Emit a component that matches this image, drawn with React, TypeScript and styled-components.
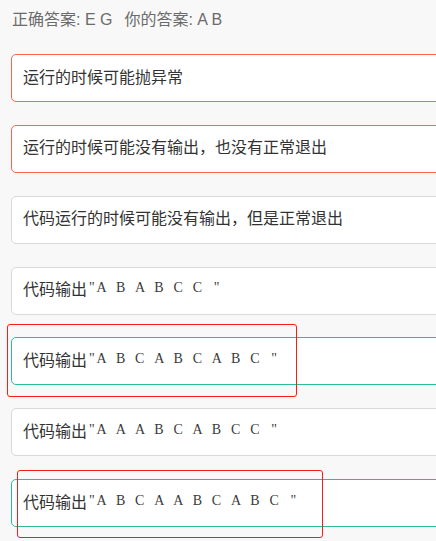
import React from "react";
import styled, { createGlobalStyle } from "styled-components";

const Global = createGlobalStyle`
  html, body {
    margin: 0;
    padding: 0;
    background: #f8f8f8;
    overflow: hidden;
  }
  #root {
    width: 436px;
    height: 541px;
    overflow: hidden;
  }
`;

const Page = styled.div`
  position: relative;
  width: 436px;
  height: 541px;
  overflow: hidden;
  background: #f8f8f8;
  box-sizing: border-box;
  padding: 8px 0 0 11px;
`;

const Summary = styled.div`
  font-family: "Liberation Sans", "Noto Sans CJK SC", sans-serif;
  font-size: 16px;
  line-height: 24px;
  color: #6b6b6b;
  padding-left: 1px;
  display: flex;
  gap: 12px;
`;

const OptionList = styled.div`
  display: flex;
  flex-direction: column;
  gap: 22.85px;
  margin-top: 22px;
`;

type Status = "wrong" | "right" | "plain";

const borderColor: Record<Status, string> = {
  wrong: "#f7694b",
  right: "#2bbc9a",
  plain: "#d9d9d9",
};

const Option = styled.div<{ $status: Status }>`
  width: 520px;
  box-sizing: border-box;
  height: 48px;
  border: 1px solid ${(p) => borderColor[p.$status]};
  border-radius: 5px;
  background: #ffffff;
  padding: 0 11px 5px;
  display: flex;
  align-items: center;
  font-family: "Noto Sans CJK SC", sans-serif;
  font-size: 16px;
  line-height: 24px;
  color: #333333;
  white-space: pre;
`;

const Code = styled.span`
  display: inline-flex;
  align-items: baseline;
  font-family: "Liberation Serif", serif;
  font-size: 14px;
  color: #3a3a3a;
`;

const Cell = styled.span`
  display: inline-block;
  width: 9.6px;
  text-align: center;
`;

const Mark = styled.div<{ $x: number; $y: number; $w: number; $h: number }>`
  position: absolute;
  left: ${(p) => p.$x}px;
  top: ${(p) => p.$y}px;
  width: ${(p) => p.$w}px;
  height: ${(p) => p.$h}px;
  box-sizing: border-box;
  border: 1.5px solid #f51c1c;
  border-radius: 3px;
  pointer-events: none;
`;

const options: { text: string; code?: string; status: Status }[] = [
  { text: "运行的时候可能抛异常", status: "wrong" },
  { text: "运行的时候可能没有输出，也没有正常退出", status: "wrong" },
  { text: "代码运行的时候可能没有输出，但是正常退出", status: "plain" },
  { text: "代码输出", code: '"A B A B C C "', status: "plain" },
  { text: "代码输出", code: '"A B C A B C A B C "', status: "right" },
  { text: "代码输出", code: '"A A A B C A B C C "', status: "plain" },
  { text: "代码输出", code: '"A B C A A B C A B C "', status: "right" },
];

export default function App() {
  return (
    <>
      <Global />
      <Page>
        <Summary>
          <span>正确答案: E G</span>
          <span>你的答案: A B</span>
        </Summary>
        <OptionList>
          {options.map((o, i) => (
            <Option key={i} $status={o.status}>
              {o.text}
              {o.code && (
                <Code>
                  {o.code.split("").map((c, j) => (
                    <Cell key={j}>{c}</Cell>
                  ))}
                </Code>
              )}
            </Option>
          ))}
        </OptionList>
        <Mark $x={7} $y={324} $w={290} $h={73} />
        <Mark $x={17} $y={470} $w={306} $h={68} />
      </Page>
    </>
  );
}
